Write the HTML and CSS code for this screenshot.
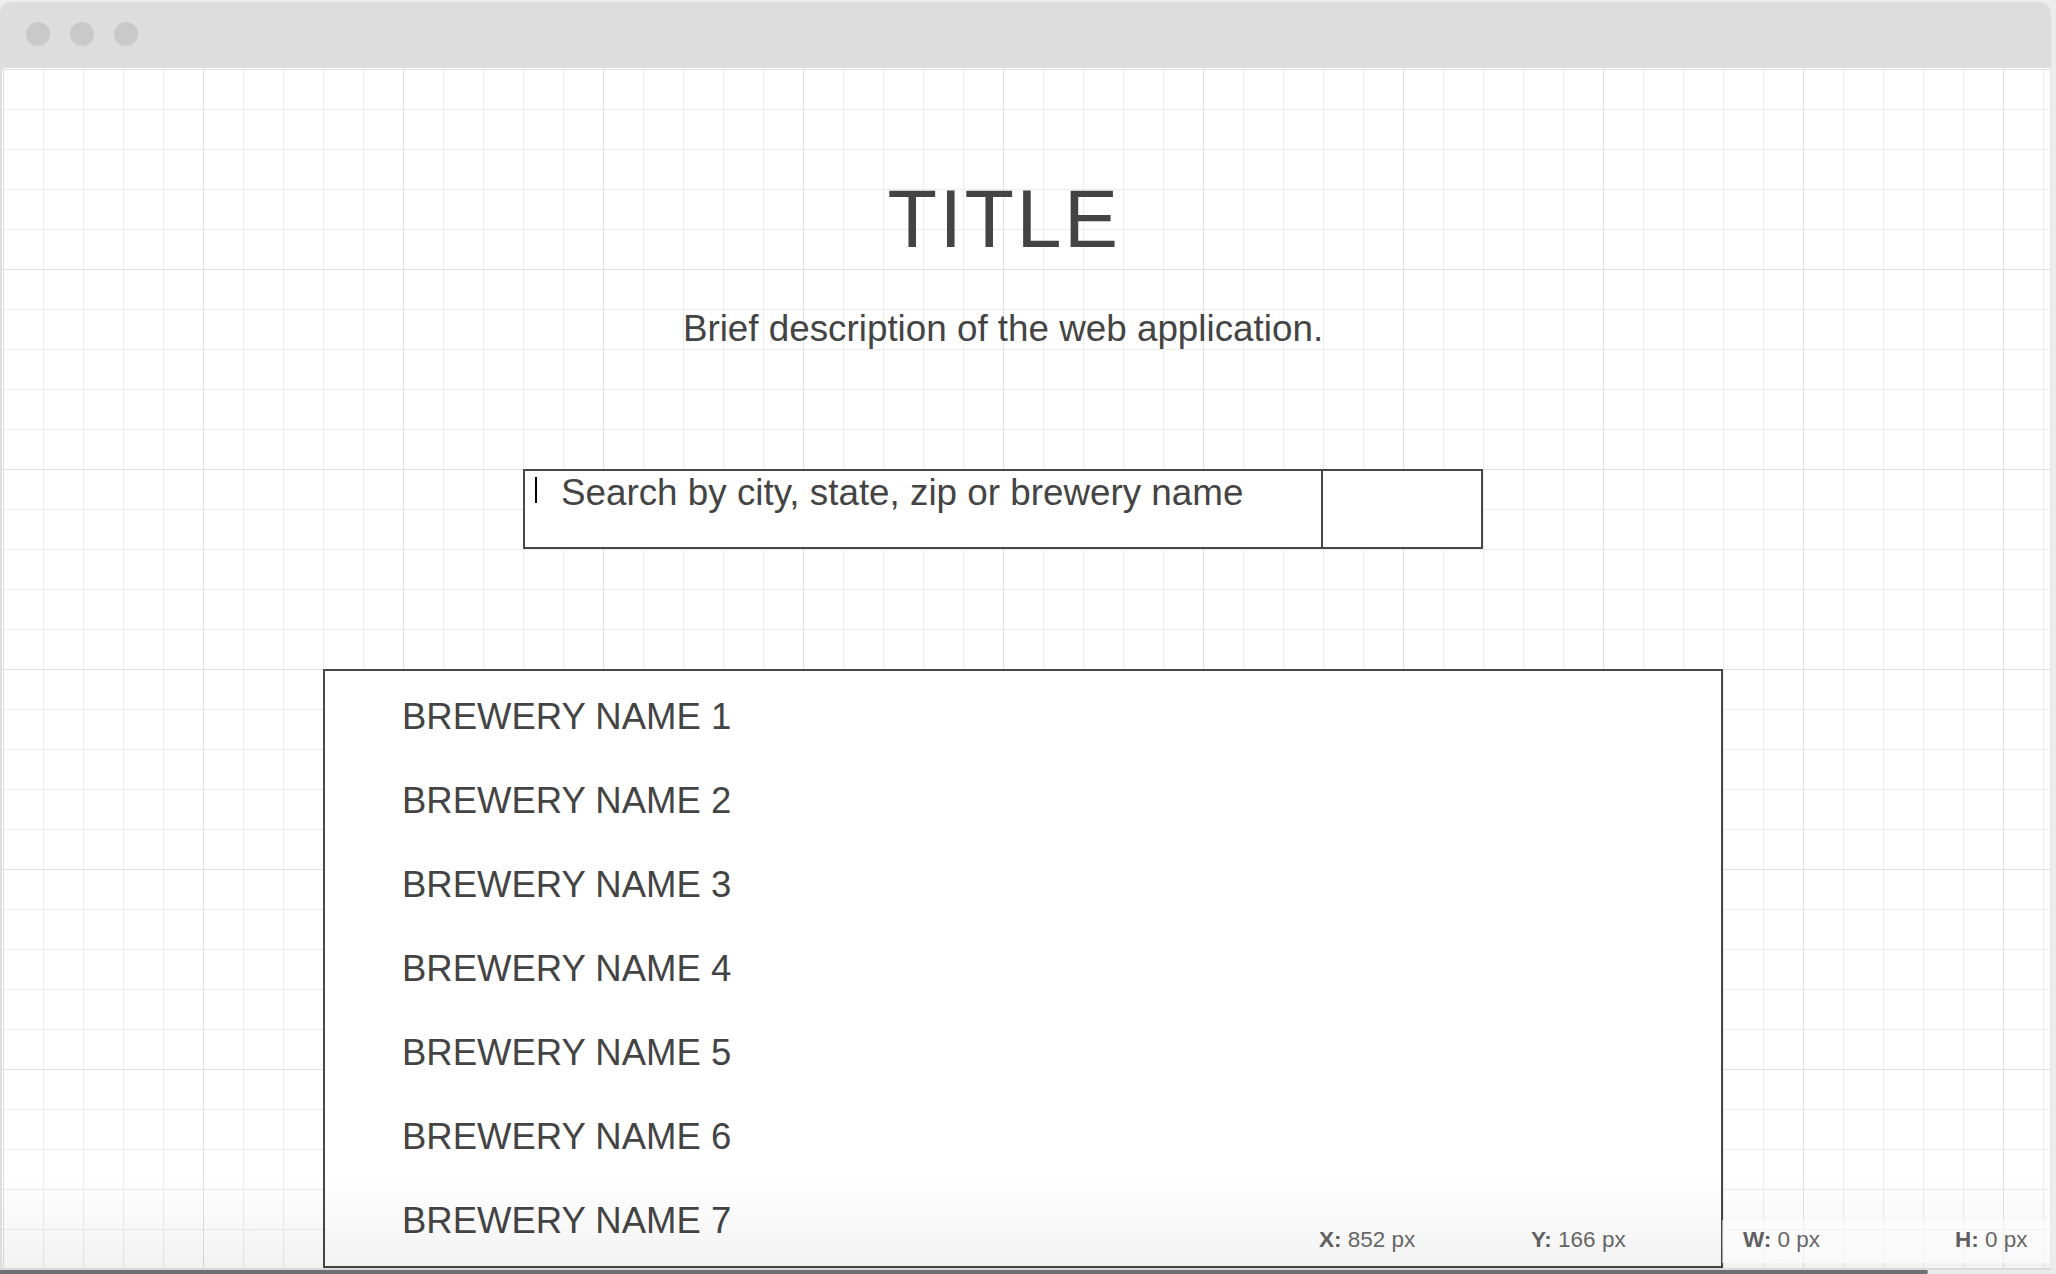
FILE: index.html
```html
<!DOCTYPE html>
<html lang="en">
<head>
<meta charset="utf-8">
<title>Brewery search wireframe</title>
<link rel="stylesheet" href="styles.css">
</head>
<body>
<div class="window">
  <div class="titlebar">
    <span class="dot"></span><span class="dot"></span><span class="dot"></span>
  </div>
  <div class="canvas">
    <div class="stack">
      <h1 class="title">TITLE</h1>
      <p class="desc">Brief description of the web application.</p>
      <div class="search">
        <div class="field"><span class="caret"></span><span class="placeholder">Search by city, state, zip or brewery name</span></div>
        <div class="btn"></div>
      </div>
      <div class="list">
        <div class="item">BREWERY NAME 1</div>
        <div class="item">BREWERY NAME 2</div>
        <div class="item">BREWERY NAME 3</div>
        <div class="item">BREWERY NAME 4</div>
        <div class="item">BREWERY NAME 5</div>
        <div class="item">BREWERY NAME 6</div>
        <div class="item">BREWERY NAME 7</div>
      </div>
    </div>
    <div class="fade"></div>
    <div class="status">
      <span class="stat"><b>X:</b> 852 px</span>
      <span class="stat"><b>Y:</b> 166 px</span>
      <span class="stat"><b>W:</b> 0 px</span>
      <span class="stat"><b>H:</b> 0 px</span>
    </div>
  </div>
  <div class="hscroll"><div class="thumb"></div></div>
</div>
</body>
</html>
```
FILE: styles.css
```css
html, body {
  margin: 0;
  padding: 0;
}
body {
  background: #ececec;
  height: 1274px;
  overflow: hidden;
  font-family: "Liberation Sans", Arial, sans-serif;
  color: #444444;
}
.window {
  margin: 2px 5px 0 0;
  height: 1272px;
  border-radius: 10px 10px 0 0;
  overflow: hidden;
  background: #ffffff;
  display: flex;
  flex-direction: column;
}
.titlebar {
  height: 66px;
  flex: none;
  background: #dddddd;
  display: flex;
  align-items: center;
  gap: 20px;
  padding-left: 26px;
  box-sizing: border-box;
}
.dot {
  width: 24px;
  height: 24px;
  border-radius: 50%;
  background: #c9c9c9;
  margin-top: -2px;
}
.canvas {
  position: relative;
  height: 1200px;
  flex: none;
  border-left: 2px solid #dedede;
  border-right: 1px solid #e6e6e6;
  padding-left: 1px;
  overflow: hidden;
  background-color: #ffffff;
  background-image:
    linear-gradient(to right, #e0e0e0 1px, transparent 1px),
    linear-gradient(to bottom, #e0e0e0 1px, transparent 1px),
    linear-gradient(to right, #ececec 1px, transparent 1px),
    linear-gradient(to bottom, #ececec 1px, transparent 1px);
  background-size: 200px 200px, 200px 200px, 40px 40px, 40px 40px;
  background-position: 1px 1px;
}
.stack {
  width: 2000px;
  height: 100%;
  display: flex;
  flex-direction: column;
}
.title {
  margin: 111px 0 0;
  font-size: 81px;
  line-height: 81px;
  font-weight: normal;
  letter-spacing: 2.5px;
  text-align: center;
  color: #444444;
  padding-left: 2px;
}
.desc {
  margin: 50px 0 0;
  font-size: 36.8px;
  line-height: 37px;
  text-align: center;
  color: #444444;
}
.search {
  margin: 121.5px auto 0;
  width: 960px;
  height: 80px;
  box-sizing: border-box;
  border: 2px solid #474747;
  display: flex;
  background: #ffffff;
}
.field {
  flex: 1;
  display: flex;
  align-items: flex-start;
  padding: 6px 0 0 10px;
}
.caret {
  width: 2px;
  height: 26px;
  background: #000000;
  flex: none;
}
.placeholder {
  margin: -3px 0 0 24px;
  font-size: 36.8px;
  line-height: 37px;
  color: #444444;
  white-space: nowrap;
}
.btn {
  width: 158px;
  flex: none;
  border-left: 2px solid #474747;
}
.list {
  margin: 120px 0 0 320px;
  width: 1400px;
  flex: 1;
  box-sizing: border-box;
  border: 2px solid #474747;
  background: #ffffff;
  padding: 4px 0 0 77px;
  overflow: hidden;
}
.item {
  font-size: 36.5px;
  line-height: 84px;
  height: 84px;
  color: #444444;
  white-space: nowrap;
}
.fade {
  position: absolute;
  left: 0;
  right: 0;
  bottom: 0;
  height: 92px;
  background: linear-gradient(to bottom, rgba(0, 0, 0, 0), rgba(0, 0, 0, 0.05));
  pointer-events: none;
}
.status {
  position: absolute;
  right: 0;
  bottom: 5px;
  width: 760px;
  height: 43px;
  box-sizing: border-box;
  padding-left: 29px;
  display: flex;
  background: linear-gradient(to right, transparent 432px, rgba(255, 255, 255, 0.55) 432px);
  font-size: 22.5px;
  line-height: 40px;
  color: #666666;
}
.stat {
  width: 212px;
  flex: none;
  white-space: nowrap;
}
.stat b {
  font-weight: bold;
  color: #606060;
}
.hscroll {
  height: 6px;
  flex: none;
  background: #ebebeb;
  border-top: 2px solid #dadada;
  box-sizing: border-box;
}
.thumb {
  width: 1928px;
  height: 4px;
  background: #6c6f74;
  border-radius: 0 3px 3px 0;
}
```
